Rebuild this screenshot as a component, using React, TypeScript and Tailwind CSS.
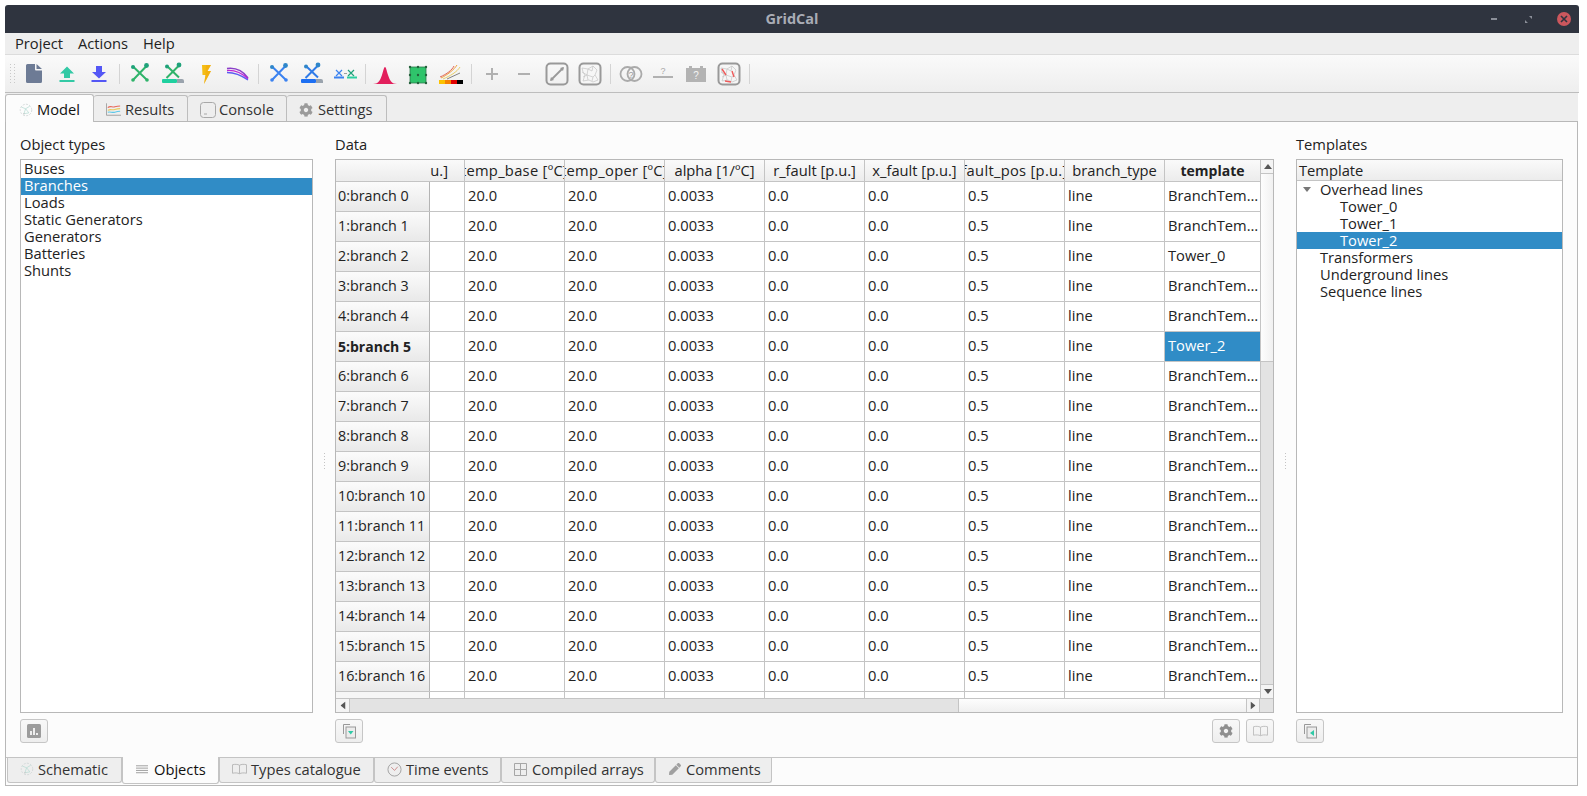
import type { ReactNode } from "react";
import { FaCog, FaPen } from "react-icons/fa";

const colLabels = [
  { label: "temp_base [ºC]", wide: true },
  { label: "temp_oper [ºC]", wide: true },
  { label: "alpha [1/ºC]", wide: false },
  { label: "r_fault [p.u.]", wide: false },
  { label: "x_fault [p.u.]", wide: false },
  { label: "fault_pos [p.u.]", wide: true },
  { label: "branch_type", wide: false },
];

const objectTypes = ["Buses", "Branches", "Loads", "Static Generators", "Generators", "Batteries", "Shunts"];

const rowValues = ["20.0", "20.0", "0.0033", "0.0", "0.0", "0.5", "line"];

const templateFor = (i: number) => (i === 2 ? "Tower_0" : i === 5 ? "Tower_2" : "BranchTem…");

const Ico = ({ children, size = 24 }: { children: ReactNode; size?: number }) => (
  <svg width={size} height={size} viewBox="0 0 24 24" fill="none">
    {children}
  </svg>
);

const Tool = ({ children }: { children: ReactNode }) => (
  <div className="w-[32.75px] h-full flex items-center justify-center shrink-0">{children}</div>
);

const Sep = () => (
  <div className="w-[8px] h-full flex items-center justify-center shrink-0">
    <div className="w-px h-[20px] bg-[#d4d4d4]" />
  </div>
);

const Cross = ({ line, node }: { line: string; node: string }) => (
  <Ico>
    <path d="M5 4.500 19 18M18.500 4 5 18" stroke={line} strokeWidth="2" />
    <circle cx="5" cy="5" r="2" fill={node} />
    <circle cx="18.500" cy="3.500" r="2.400" fill={node} />
    <circle cx="5" cy="18" r="1.800" fill={line} />
    <circle cx="19" cy="18" r="1.800" fill={line} />
  </Ico>
);

const CrossBar = ({ line, node, bar }: { line: string; node: string; bar: string }) => (
  <Ico>
    <path d="M6.500 4.500 18 15.500M17.500 4 5.500 16" stroke={line} strokeWidth="2" />
    <circle cx="6" cy="4.500" r="2" fill={node} />
    <circle cx="18" cy="3" r="2.400" fill={node} />
    <rect x="1" y="17" width="15" height="4" rx="1" fill={bar} />
    <path d="M16 17h5a2 2 0 0 1 2 2v2h-7z" fill="#9aa3ad" />
  </Ico>
);

const Doodle = ({ color, red }: { color: string; red?: boolean }) => (
  <Ico>
    <rect x="1.500" y="1.500" width="21" height="21" rx="4" fill="#f6f6f6" stroke="#999" strokeWidth="2" />
    <path
      d="M4 6l6 1 5-3 4 4-2 5 3 5-5 2-4-2-6 1 2-6-2-3zM10 7l-1 6 6 2 2-2M9 13l-4 2M15 15l-1 4M9 13l1 5M4 10l5 3M15 4l-1 5-4-2"
      stroke={color}
      strokeWidth="0.700"
    />
    {red && <path d="M5 7l4 6M15 9l2 6M8 19l6 1" stroke="#ee5a5a" strokeWidth="1.400" />}
  </Ico>
);

const Toolbar = () => (
  <div className="h-[38px] flex items-center bg-gradient-to-b from-[#fafafa] to-[#eeeeee] border-b border-[#bdbdbd] pl-[5px]">
    <div className="w-[7.5px] h-[20px] grid grid-cols-2 gap-[1px] content-between shrink-0">
      {Array.from({ length: 14 }).map((_, i) => (
        <div key={i} className="w-px h-px bg-[#c9c9c9]" />
      ))}
    </div>
    <Tool>
      <Ico>
        <path
          d="M5.500 2H13v5.500a1 1 0 0 0 1 1h6v11a1.500 1.500 0 0 1-1.500 1.500h-13A1.500 1.500 0 0 1 4 19.500v-16A1.500 1.500 0 0 1 5.500 2zM14.500 2 20 7h-5.500z"
          fill="#6d7b95"
        />
      </Ico>
    </Tool>
    <Tool>
      <Ico>
        <path d="M12 4.500 19 11.500h-4V16H9v-4.500H5z" fill="#33c9a5" />
        <rect x="4.500" y="18" width="15" height="2" fill="#33c9a5" />
      </Ico>
    </Tool>
    <Tool>
      <Ico>
        <path d="M9 4h6v6h4l-7 6.500L5 10h4z" fill="#5457f5" />
        <rect x="4.500" y="18" width="15" height="2" fill="#5457f5" />
      </Ico>
    </Tool>
    <Sep />
    <Tool>
      <Cross line="#2fb36a" node="#1fa27a" />
    </Tool>
    <Tool>
      <CrossBar line="#2fb36a" node="#1fa27a" bar="#1fd09f" />
    </Tool>
    <Tool>
      <Ico>
        <path d="M8 3h9l-3.500 6H17L10 22l1.500-9H8.500z" fill="#f5bd14" />
        <path d="M12 3h5l-3.500 6H17L10 22l1.500-9z" fill="#f2a60c" opacity="0.5" />
      </Ico>
    </Tool>
    <Tool>
      <Ico>
        <path d="M1 6.500C9 5.500 17 9 22 16" stroke="#8b3fc9" strokeWidth="1.500" />
        <path d="M1 8.500C9 8 16 11 22 17" stroke="#c026d3" strokeWidth="1.300" />
        <path d="M1 10.500C8 10.500 15 13 22 18" stroke="#5b5bf0" strokeWidth="1.300" />
      </Ico>
    </Tool>
    <Sep />
    <Tool>
      <Cross line="#3b82f0" node="#2f86c9" />
    </Tool>
    <Tool>
      <CrossBar line="#2f7be8" node="#2f86c9" bar="#1d6ff2" />
    </Tool>
    <Tool>
      <Ico>
        <path d="M3 8l6 6M9 8l-6 6" stroke="#3b82f0" strokeWidth="1.200" />
        <path d="M15 8l6 6M21 8l-6 6" stroke="#1fa27a" strokeWidth="1.200" />
        <rect x="1" y="14.500" width="10" height="2" fill="#3b82f0" />
        <rect x="14" y="14.500" width="10" height="2" fill="#2ccfa0" />
        <path d="M11 11.500h3" stroke="#888" strokeWidth="0.800" />
      </Ico>
    </Tool>
    <Sep />
    <Tool>
      <Ico>
        <path d="M0 22c5 0 7-3 9-9 1.500-5 2-8 3-8s1.500 3 3 8c2 6 4 9 9 9z" fill="#e21f5c" />
      </Ico>
    </Tool>
    <Tool>
      <Ico>
        <rect x="4" y="5" width="16" height="16" rx="1" fill="#2fc46b" stroke="#2c7a4b" strokeWidth="0.800" />
        {[4, 12, 20].map((x) =>
          [5, 13, 21].map((y) => <circle key={`${x}-${y}`} cx={x} cy={y} r="1.200" fill="#24613c" />),
        )}
      </Ico>
    </Tool>
    <Tool>
      <Ico>
        <path d="M2 16C8 13 15 8 18 3" stroke="#f0a13a" strokeWidth="1" />
        <path d="M4 17C11 14 18 10 21 5" stroke="#e8d06a" strokeWidth="1" />
        <path d="M1 15C8 12 13 8 15 4" stroke="#e0655a" strokeWidth="1" />
        <path d="M8 17 21 11" stroke="#666" strokeWidth="0.800" />
        <rect x="0" y="18" width="6" height="4" fill="#fbc200" />
        <rect x="6" y="18" width="6" height="4" fill="#f58200" />
        <rect x="12" y="18" width="6" height="4" fill="#e00000" />
        <rect x="18" y="18" width="6" height="4" fill="#000000" />
      </Ico>
    </Tool>
    <Sep />
    <Tool>
      <Ico>
        <path d="M12 6v12M6 12h12" stroke="#b0b0b0" strokeWidth="2" />
      </Ico>
    </Tool>
    <Tool>
      <Ico>
        <path d="M6 12h12" stroke="#b0b0b0" strokeWidth="2" />
      </Ico>
    </Tool>
    <Tool>
      <Ico>
        <rect x="1.500" y="1.500" width="21" height="21" rx="4" stroke="#999" strokeWidth="2" />
        <path d="M6 18 18 6" stroke="#999" strokeWidth="1.800" />
        <path d="M5 19l1-4 3 3zM19 5l-1 4-3-3z" fill="#999" />
      </Ico>
    </Tool>
    <Tool>
      <Doodle color="#c4c4c4" />
    </Tool>
    <Sep />
    <Tool>
      <Ico>
        <circle cx="8.500" cy="12" r="7" stroke="#aaa" strokeWidth="1.800" />
        <circle cx="15.500" cy="12" r="7" stroke="#aaa" strokeWidth="1.800" />
        <text x="12" y="15.500" fontSize="9" textAnchor="middle" fill="#999" fontFamily="Liberation Sans, sans-serif">
          ?
        </text>
      </Ico>
    </Tool>
    <Tool>
      <Ico>
        <path d="M2 15h20" stroke="#aaa" strokeWidth="1.800" />
        <text x="12" y="12" fontSize="9" textAnchor="middle" fill="#aaa" fontFamily="Liberation Sans, sans-serif">
          ?
        </text>
      </Ico>
    </Tool>
    <Tool>
      <Ico>
        <path d="M2 6h3V4h3v2h8V4h3v2h3v14H2z" fill="#b3b3b3" />
        <text x="12" y="17" fontSize="10" textAnchor="middle" fill="#f4f4f4" fontFamily="Liberation Sans, sans-serif">
          ?
        </text>
      </Ico>
    </Tool>
    <Tool>
      <Doodle color="#c4c4c4" red />
    </Tool>
    <Sep />
  </div>
);

const SwirlIcon = () => (
  <svg width="14" height="14" viewBox="0 0 17 17" fill="none">
    <circle cx="8.500" cy="8.500" r="7" stroke="#cfd6d6" strokeWidth="1" strokeDasharray="2.500 1.500" />
    <path d="M3 5l5 2 5-3M8 7l-2 6 6-1-4-5" stroke="#b7dcd3" strokeWidth="0.900" />
    <circle cx="6" cy="13" r="1" fill="#c9c9c9" />
  </svg>
);

const TopTab = ({ label, icon, gap, active }: { label: string; icon: ReactNode; gap: string; active?: boolean }) => (
  <div
    className={`flex items-center pt-[2px] ${gap} ${
      active
        ? "h-[28px] -mb-px z-10 w-[89px] pl-[13px] bg-[#fcfcfc] border border-b-0 border-[#bdbdbd] rounded-t-[3px] text-[#111111]"
        : "h-[26px] pl-[12px] bg-[#eeeeee] border border-b-0 border-l-0 border-[#bdbdbd] rounded-t-[3px] text-[#333333]"
    }`}
  >
    {icon}
    <span>{label}</span>
  </div>
);

const BottomTab = ({
  label,
  icon,
  width,
  spacing,
  active,
}: {
  label: string;
  icon: ReactNode;
  width: string;
  spacing: string;
  active?: boolean;
}) => (
  <div
    className={`flex items-center pb-[2px] border border-t-0 border-[#c4c4c4] rounded-b-[3px] ${width} ${spacing} ${
      active ? "h-[27px] -mt-px bg-[#fcfcfc] text-[#111111]" : "h-[25px] bg-[#eeeeee] text-[#333333] border-t"
    }`}
  >
    {icon}
    <span>{label}</span>
  </div>
);

const SmallButton = ({ children }: { children: ReactNode }) => (
  <div className="w-[28px] h-[24px] flex items-center justify-center border border-[#c6c6c6] rounded-[3px] bg-gradient-to-b from-[#f8f8f8] to-[#eeeeee]">
    {children}
  </div>
);

const CopyIcon = ({ arrow }: { arrow: string }) => (
  <svg width="16" height="16" viewBox="0 0 16 16" fill="none">
    <path d="M2.500 11V1.500H9" stroke="#999" strokeWidth="1" />
    <rect x="5" y="4" width="9.500" height="11" fill="#ececec" stroke="#999" />
    <path d={arrow} fill="#2fc9a6" />
  </svg>
);

const BookIcon = ({ color }: { color: string }) => (
  <svg width="15" height="12" viewBox="0 0 16 12" fill="none">
    <path d="M8 2C6 .8 3 .8 .5 1.500v9C3 10 6 10 8 11c2-1 5-1 7.500-.500v-9C13 .8 10 .8 8 2zM8 2v9" stroke={color} />
  </svg>
);

const Splitter = ({ width }: { width: string }) => (
  <div className={`${width} shrink-0 flex flex-col items-center justify-center`}>
    <div className="flex flex-col gap-[2px] mt-[57px]">
      {Array.from({ length: 6 }).map((_, i) => (
        <div key={i} className="w-px h-px bg-[#c4c4c4]" />
      ))}
    </div>
  </div>
);

const ArrowUp = () => (
  <svg width="8" height="5" viewBox="0 0 8 5">
    <path d="M4 0l4 5H0z" fill="#555" />
  </svg>
);

const ColHeader = ({ label, wide }: { label: string; wide: boolean }) => (
  <div className="w-[100px] h-full shrink-0 flex items-center justify-center overflow-hidden whitespace-nowrap border-r border-[#c4c4c4]">
    <span className={`shrink-0 ${wide ? "tracking-[0.3px]" : ""}`}>{label}</span>
  </div>
);

const Cell = ({ children, width = "w-[100px]" }: { children?: ReactNode; width?: string }) => (
  <div className={`${width} h-full shrink-0 flex items-center pl-[3px] pb-[2px] border-r border-[#c4c4c4] overflow-hidden whitespace-nowrap`}>
    {children}
  </div>
);

const Row = ({ index }: { index: number }) => (
  <div className="h-[30px] shrink-0 flex border-b border-[#c4c4c4] text-[#222222]">
    <div
      className={`w-[94px] h-full shrink-0 flex items-center pl-[2px] bg-gradient-to-b from-[#fbfbfb] to-[#e9e9e9] border-r border-[#b4b4b4] whitespace-nowrap ${
        index === 5 ? "font-bold text-[14px]" : "text-[14.3px]"
      }`}
    >
      {index}:branch {index}
    </div>
    <Cell width="w-[35px]" />
    {rowValues.map((value, i) => (
      <Cell key={i}>{value}</Cell>
    ))}
    <div
      className={`w-[95px] h-full shrink-0 flex items-center pl-[3px] pb-[2px] whitespace-nowrap ${
        index === 5 ? "bg-[#308cc6] text-white" : ""
      }`}
    >
      {templateFor(index)}
    </div>
  </div>
);

const DataTable = () => (
  <div className="flex-1 min-h-0 border border-[#b8b8b8] bg-white flex flex-col overflow-hidden">
    <div className="flex-1 min-h-0 flex">
      <div className="w-[924px] shrink-0 flex flex-col overflow-hidden">
        <div className="h-[22px] shrink-0 flex items-center bg-gradient-to-b from-[#fafafa] to-[#ececec] border-b border-[#c4c4c4] text-[#222222]">
          <div className="w-[129px] h-full shrink-0 flex items-center justify-end pr-[16px] border-r border-[#c4c4c4]">u.]</div>
          {colLabels.map((col) => (
            <ColHeader key={col.label} label={col.label} wide={col.wide} />
          ))}
          <div className="w-[95px] h-full shrink-0 flex items-center justify-center font-bold text-[14px]">template</div>
        </div>
        {Array.from({ length: 17 }).map((_, i) => (
          <Row key={i} index={i} />
        ))}
        <div className="flex-1 min-h-0 flex">
          <div className="w-[94px] shrink-0 bg-[#f6f6f6] border-r border-[#b4b4b4]" />
          <div className="w-[35px] shrink-0 border-r border-[#c4c4c4]" />
          {rowValues.map((_, i) => (
            <div key={i} className="w-[100px] shrink-0 border-r border-[#c4c4c4]" />
          ))}
        </div>
      </div>
      <div className="w-[14px] shrink-0 flex flex-col border-l border-[#c4c4c4] bg-[#e3e3e3]">
        <div className="h-[14px] shrink-0 flex items-center justify-center bg-[#f4f4f4] border-b border-[#c4c4c4]">
          <ArrowUp />
        </div>
        <div className="h-[188px] shrink-0 bg-gradient-to-r from-[#fdfdfd] to-[#f0f0f0] border-b border-[#c4c4c4]" />
        <div className="flex-1" />
        <div className="h-[14px] shrink-0 flex items-center justify-center bg-[#f4f4f4] border-t border-[#c4c4c4]">
          <div className="rotate-180 flex">
            <ArrowUp />
          </div>
        </div>
      </div>
    </div>
    <div className="h-[14px] shrink-0 flex border-t border-[#c4c4c4] bg-[#e3e3e3]">
      <div className="w-[14px] shrink-0 flex items-center justify-center bg-[#f4f4f4] border-r border-[#c4c4c4]">
        <div className="-rotate-90 flex">
          <ArrowUp />
        </div>
      </div>
      <div className="w-[608px] shrink-0" />
      <div className="w-[288px] shrink-0 bg-gradient-to-b from-[#fdfdfd] to-[#f0f0f0] border-l border-[#c4c4c4]" />
      <div className="w-[14px] shrink-0 flex items-center justify-center bg-[#f4f4f4] border-x border-[#c4c4c4]">
        <div className="rotate-90 flex">
          <ArrowUp />
        </div>
      </div>
      <div className="flex-1" />
    </div>
  </div>
);

export default function App() {
  return (
    <div className="w-full h-[796px] bg-white pt-[5px] pl-[5px] pr-[8px] pb-[10px] flex flex-col overflow-hidden text-[14.7px] leading-none text-[#222222] font-['Open_Sans','Noto_Sans',sans-serif]">
      {/* title bar */}
      <div className="h-[28px] shrink-0 flex items-center bg-[#2f343f] rounded-t-[3px] relative">
        <div className="flex-1 text-center font-bold text-[14.5px] text-[#a9acb5]">GridCal</div>
        <div className="flex items-center absolute right-[8px] top-[7px]">
          <div className="w-[6px] h-[2px] bg-[#8b8f99] mr-[28px]" />
          <svg className="mr-[25px]" width="7" height="7" viewBox="0 0 7 7">
            <path d="M7 0v3L4 0zM0 7V4l3 3z" fill="#8b8f99" />
          </svg>
          <div className="w-[14px] h-[14px] rounded-full bg-[#cc575d] flex items-center justify-center">
            <svg width="8" height="8" viewBox="0 0 8 8">
              <path d="M1 1l6 6M7 1 1 7" stroke="#2f343f" strokeWidth="1.600" />
            </svg>
          </div>
        </div>
      </div>

      {/* menu */}
      <div className="h-[22px] shrink-0 flex items-center gap-[15px] pl-[10px] bg-[#eeeeee] border-b border-[#dcdcdc]">
        <span>Project</span>
        <span>Actions</span>
        <span>Help</span>
      </div>

      <Toolbar />

      {/* top tabs */}
      <div className="h-[29px] shrink-0 flex items-end bg-[#eeeeee] border-b border-[#b8b8b8] w-[1573px]">
        <TopTab label="Model" active gap="gap-[4px]" icon={<SwirlIcon />} />
        <div className="w-[94px]">
          <TopTab
            label="Results"
            gap="gap-[4px]"
            icon={
              <svg width="15" height="13" viewBox="0 0 17 14" fill="none">
                <path d="M.5 0v13.500H17" stroke="#999" />
                <path d="M2 5c3-3 5 0 8-1s4-1 6-1" stroke="#e86a5c" strokeWidth="1.200" />
                <path d="M2 8c3-2 5 0 8-1s4-1 6-1" stroke="#e8c95c" strokeWidth="1.200" />
                <path d="M2 10c3-1 5 1 8 0s4-1 6-1" stroke="#5cc8e8" strokeWidth="1.200" />
              </svg>
            }
          />
        </div>
        <div className="w-[99px]">
          <TopTab
            label="Console"
            gap="gap-[3px]"
            icon={
              <svg width="16" height="16" viewBox="0 0 16 16" fill="none">
                <rect x="0.500" y="0.500" width="15" height="15" rx="3" stroke="#a8a8a8" />
                <path d="M4 12h3" stroke="#a8a8a8" />
              </svg>
            }
          />
        </div>
        <div className="w-[100px]">
          <TopTab label="Settings" gap="gap-[5px]" icon={<FaCog className="text-[#9b9b9b] text-[14px]" />} />
        </div>
      </div>

      {/* main pane */}
      <div className="flex-1 min-h-0 w-[1573px] flex flex-col bg-[#fcfcfc] border border-t-0 border-[#b8b8b8]">
        <div className="flex-1 min-h-0 flex pl-[14px] pr-[14px] pb-[14px] border-b border-[#c4c4c4]">
          <div className="w-[293px] shrink-0 flex flex-col">
            <div className="h-[37px] shrink-0 flex items-center pt-[10px] pb-[3px]">Object types</div>
            <div className="flex-1 min-h-0 border border-[#b8b8b8] bg-white pt-px">
              {objectTypes.map((name) => (
                <div
                  key={name}
                  className={`h-[17px] flex items-center pl-[3px] pb-[2px] ${name === "Branches" ? "bg-[#308cc6] text-white" : ""}`}
                >
                  {name}
                </div>
              ))}
            </div>
            <div className="h-[30px] shrink-0 flex items-end">
              <SmallButton>
                <svg width="14" height="14" viewBox="0 0 14 14">
                  <rect width="14" height="14" rx="1.500" fill="#9c9c9c" />
                  <path d="M3 7h2v4H3zM6 4h2v7H6zM9 9h2v2H9z" fill="#eeeeee" />
                </svg>
              </SmallButton>
            </div>
          </div>

          <Splitter width="w-[22px]" />

          <div className="w-[939px] shrink-0 flex flex-col">
            <div className="h-[37px] shrink-0 flex items-center pt-[10px] pb-[3px]">Data</div>
            <DataTable />
            <div className="h-[30px] shrink-0 flex items-end justify-between">
              <SmallButton>
                <CopyIcon arrow="M7 8h5.500l-2.750 3.500z" />
              </SmallButton>
              <div className="flex gap-[6px]">
                <SmallButton>
                  <FaCog className="text-[#8f8f8f] text-[14px]" />
                </SmallButton>
                <SmallButton>
                  <BookIcon color="#bdbdbd" />
                </SmallButton>
              </div>
            </div>
          </div>

          <Splitter width="w-[22px]" />

          <div className="w-[267px] shrink-0 flex flex-col">
            <div className="h-[37px] shrink-0 flex items-center pt-[10px] pb-[3px]">Templates</div>
            <div className="flex-1 min-h-0 border border-[#b8b8b8] bg-white">
              <div className="h-[21px] flex items-center pl-[2px] bg-gradient-to-b from-[#fafafa] to-[#ececec] border-b border-[#c4c4c4]">
                Template
              </div>
              <div className="h-[17px] flex items-center pl-[23px] relative">
                <svg className="absolute left-[6px] top-[6px]" width="8" height="5" viewBox="0 0 8 5">
                  <path d="M0 0h8L4 5z" fill="#777" />
                </svg>
                Overhead lines
              </div>
              <div className="h-[17px] flex items-center pl-[43px]">Tower_0</div>
              <div className="h-[17px] flex items-center pl-[43px]">Tower_1</div>
              <div className="h-[17px] flex items-center pl-[43px] bg-[#308cc6] text-white">Tower_2</div>
              <div className="h-[17px] flex items-center pl-[23px]">Transformers</div>
              <div className="h-[17px] flex items-center pl-[23px]">Underground lines</div>
              <div className="h-[17px] flex items-center pl-[23px]">Sequence lines</div>
            </div>
            <div className="h-[30px] shrink-0 flex items-end">
              <SmallButton>
                <CopyIcon arrow="M12 7v6l-4-3z" />
              </SmallButton>
            </div>
          </div>
        </div>

        {/* bottom tabs */}
        <div className="h-[27px] shrink-0 flex items-start pl-[1px]">
          <BottomTab width="w-[115px]" spacing="pl-[12px] gap-[4px]" label="Schematic" icon={<SwirlIcon />} />
          <BottomTab
            width="w-[97px]"
            spacing="pl-[13px] gap-[6px]"
            label="Objects"
            active
            icon={
              <svg width="12" height="11" viewBox="0 0 13 11">
                <path d="M0 1.500h13M0 4h13M0 6.500h13M0 9h13" stroke="#999" />
              </svg>
            }
          />
          <BottomTab width="w-[155px]" spacing="pl-[12px] gap-[4px]" label="Types catalogue" icon={<BookIcon color="#b5b5b5" />} />
          <BottomTab
            width="w-[127px]"
            spacing="pl-[12px] gap-[4px]"
            label="Time events"
            icon={
              <svg width="15" height="15" viewBox="0 0 16 16" fill="none">
                <circle cx="8" cy="8" r="7" stroke="#a0a0a0" />
                <path d="M4.500 5.500 8 9l3.500-4" stroke="#c98a8a" />
              </svg>
            }
          />
          <BottomTab
            width="w-[154px]"
            spacing="pl-[12px] gap-[5px]"
            label="Compiled arrays"
            icon={
              <svg width="13" height="13" viewBox="0 0 13 13" fill="none">
                <path d="M.5.500h12v12H.5zM6.500.500v12M.5 6.500h12" stroke="#a6a6a6" />
              </svg>
            }
          />
          <BottomTab
            width="w-[117px]"
            spacing="pl-[13px] gap-[5px]"
            label="Comments"
            icon={<FaPen className="text-[#a0a0a0] text-[12px]" />}
          />
        </div>
      </div>
    </div>
  );
}
